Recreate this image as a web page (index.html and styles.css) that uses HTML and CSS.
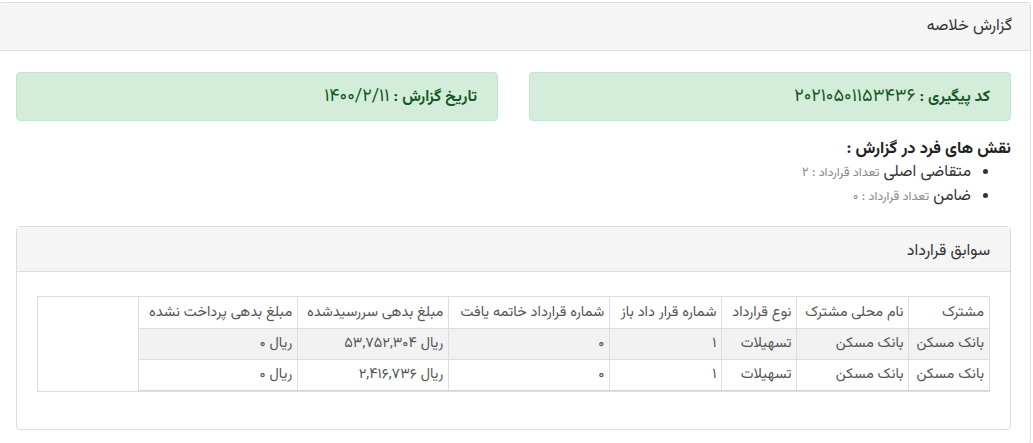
FILE: index.html
```html
<!DOCTYPE html>
<html lang="fa" dir="rtl">
<head>
  <meta charset="UTF-8">
  <title>گزارش خلاصه</title>
  <link rel="stylesheet" href="styles.css">
</head>
<body>
  <div class="panel main-panel">
    <div class="panel-heading">گزارش خلاصه</div>
    <div class="panel-body">
      <div class="alerts">
        <div class="alert"><b>کد پیگیری :</b>&nbsp;<span class="value">۲۰۲۱۰۵۰۱۱۵۳۴۳۶</span></div>
        <div class="alert"><b>تاریخ گزارش :</b>&nbsp;<span class="value">۱۴۰۰/۲/۱۱</span></div>
      </div>

      <h4 class="roles-title">نقش های فرد در گزارش :</h4>
      <ul class="roles">
        <li>متقاضی اصلی <small>تعداد قرارداد : ۲</small></li>
        <li>ضامن <small>تعداد قرارداد : ۰</small></li>
      </ul>

      <div class="panel sub-panel">
        <div class="panel-heading">سوابق قرارداد</div>
        <div class="panel-body">
          <div class="table-box">
            <table>
              <thead>
                <tr>
                  <th class="c1">مشترک</th>
                  <th class="c2">نام محلی مشترک</th>
                  <th class="c3">نوع قرارداد</th>
                  <th class="c4">شماره قرار داد باز</th>
                  <th class="c5">شماره قرارداد خاتمه یافت</th>
                  <th class="c6">مبلغ بدهی سررسیدشده</th>
                  <th class="c7">مبلغ بدهی پرداخت نشده</th>
                </tr>
              </thead>
              <tbody>
                <tr>
                  <td>بانک مسکن</td>
                  <td>بانک مسکن</td>
                  <td>تسهیلات</td>
                  <td>۱</td>
                  <td>۰</td>
                  <td>ریال ۵۳,۷۵۲,۳۰۴</td>
                  <td>ریال ۰</td>
                </tr>
                <tr>
                  <td>بانک مسکن</td>
                  <td>بانک مسکن</td>
                  <td>تسهیلات</td>
                  <td>۱</td>
                  <td>۰</td>
                  <td>ریال ۲,۴۱۶,۷۳۶</td>
                  <td>ریال ۰</td>
                </tr>
              </tbody>
            </table>
          </div>
        </div>
      </div>
    </div>
  </div>
</body>
</html>
```

FILE: styles.css
```css
body {
  margin: 0;
  font-family: "Vazirmatn", "Noto Sans Arabic", "DejaVu Sans", sans-serif;
  color: #333;
  background: white;
}

.panel {
  border: 1px solid #ddd;
  border-radius: 4px;
  background: white;
}

.main-panel {
  margin: 2px 2px 0 -2px;
  border-bottom: none;
}

.panel-heading {
  background: #f5f5f5;
  border-bottom: 1px solid #ddd;
  font-size: 16px;
  color: #333;
}

.main-panel > .panel-heading {
  height: 47px;
  line-height: 47px;
  padding-right: 18px;
}

.main-panel > .panel-body {
  padding: 21px 19px 14px 17px;
}

.alerts {
  display: grid;
  grid-template-columns: 1fr 1fr;
  gap: 31px;
}

.alert {
  height: 49px;
  box-sizing: border-box;
  display: flex;
  align-items: center;
  padding: 0 20px;
  background: #d4edda;
  border: 1px solid #c3e6cb;
  border-radius: 4px;
  color: #155724;
  font-size: 15.5px;
  margin-bottom: 16px;
}

.alert .value {
  font-size: 18px;
}

.roles-title {
  margin: 0;
  font-size: 16.5px;
  line-height: 24px;
  font-weight: bold;
  color: #222;
}

.roles {
  margin: 0 0 17px;
  padding-right: 40px;
  font-size: 16px;
  line-height: 24px;
}

.roles small {
  font-size: 12.5px;
  color: #888;
}

.sub-panel > .panel-heading {
  height: 44px;
  line-height: 50px;
  padding-right: 20px;
}

.sub-panel > .panel-body {
  padding: 24px 20px 37px 20px;
}

.table-box {
  border: 1px solid #ddd;
}

table {
  table-layout: fixed;
  width: 851px;
  border-collapse: collapse;
  font-size: 14.5px;
  color: #555;
}

th, td {
  box-sizing: border-box;
  height: 31px;
  padding: 0 5px;
  text-align: right;
  font-weight: normal;
  white-space: nowrap;
  overflow: hidden;
  border-left: 1px solid #ddd;
  border-bottom: 1px solid #ddd;
}

tbody tr:nth-child(odd) {
  background: #f2f2f2;
}

tbody tr:last-child td {
  border-bottom: 1px solid #d5d5d5;
}

.c1 { width: 80px; }
.c2 { width: 112px; }
.c3 { width: 75px; }
.c4 { width: 112px; }
.c5 { width: 161px; }
.c6 { width: 151px; }
.c7 { width: 159px; }
```
